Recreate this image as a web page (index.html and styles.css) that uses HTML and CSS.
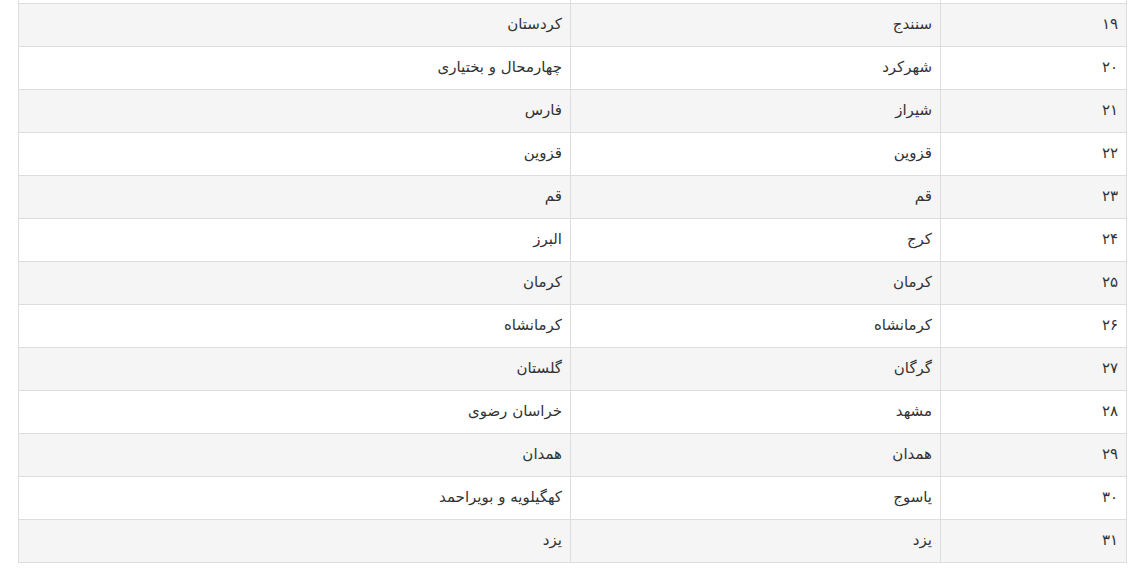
FILE: index.html
```html
<!DOCTYPE html>
<html lang="fa" dir="rtl">
<head>
<meta charset="utf-8">
<link rel="stylesheet" href="styles.css">
</head>
<body>
<div class="wrap">
<table class="cities">
<colgroup><col class="c-num"><col class="c-city"><col class="c-prov"></colgroup>
<tbody>
<tr class="cut"><td></td><td></td><td></td></tr>
<tr class="odd"><td>۱۹</td><td>سنندج</td><td>کردستان</td></tr>
<tr><td>۲۰</td><td>شهرکرد</td><td>چهارمحال و بختیاری</td></tr>
<tr class="odd"><td>۲۱</td><td>شیراز</td><td>فارس</td></tr>
<tr><td>۲۲</td><td>قزوین</td><td>قزوین</td></tr>
<tr class="odd"><td>۲۳</td><td>قم</td><td>قم</td></tr>
<tr><td>۲۴</td><td>کرج</td><td>البرز</td></tr>
<tr class="odd"><td>۲۵</td><td>کرمان</td><td>کرمان</td></tr>
<tr><td>۲۶</td><td>کرمانشاه</td><td>کرمانشاه</td></tr>
<tr class="odd"><td>۲۷</td><td>گرگان</td><td>گلستان</td></tr>
<tr><td>۲۸</td><td>مشهد</td><td>خراسان رضوی</td></tr>
<tr class="odd"><td>۲۹</td><td>همدان</td><td>همدان</td></tr>
<tr><td>۳۰</td><td>یاسوج</td><td>کهگیلویه و بویراحمد</td></tr>
<tr class="odd"><td>۳۱</td><td>یزد</td><td>یزد</td></tr>
</tbody>
</table>
</div>
</body>
</html>
```
FILE: styles.css
```css
html, body {
  margin: 0;
  padding: 0;
  background: #fff;
}
body {
  font-family: "DejaVu Sans", sans-serif;
  font-size: 15px;
  color: #333;
}
.wrap {
  margin-right: 14px;
  margin-left: 19px;
}
.cities {
  width: 1108px;
  border-collapse: collapse;
  table-layout: fixed;
}
.c-num { width: 186px; }
.c-city { width: 370px; }
.c-prov { width: 552px; }
.cities td {
  border: 1px solid #ddd;
  padding: 9px 8px 11px;
  line-height: 22px;
  text-align: right;
  vertical-align: middle;
}
.cities tr.cut td {
  border-top: 0;
  padding: 0;
  height: 3px;
  line-height: 0;
}
.cities tr.odd td {
  background: #f5f5f5;
}
```
